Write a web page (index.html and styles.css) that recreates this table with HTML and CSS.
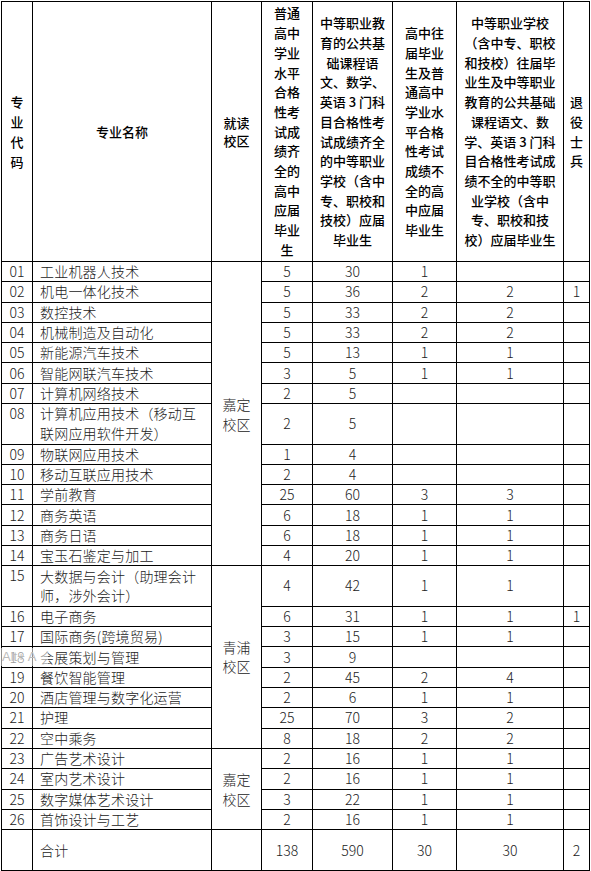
FILE: index.html
```html
<!DOCTYPE html>
<html lang="zh-CN">
<head>
<meta charset="utf-8">
<title>招生计划</title>
<link rel="stylesheet" href="styles.css">
</head>
<body>
<div class="wrap">
<table class="plan">
<colgroup>
<col class="c1"><col class="c2"><col class="c3"><col class="c4"><col class="c5"><col class="c6"><col class="c7"><col class="c8">
</colgroup>
<thead>
<tr class="head">
<th class="h-code">专<br>业<br>代<br>码</th>
<th>专业名称</th>
<th class="h-campus">就读<br>校区</th>
<th>普通<br>高中<br>学业<br>水平<br>合格<br>性考<br>试成<br>绩齐<br>全的<br>高中<br>应届<br>毕业<br>生</th>
<th>中等职业教<br>育的公共基<br>础课程语<br>文、数学、<br>英语 3 门科<br>目合格性考<br>试成绩齐全<br>的中等职业<br>学校（含中<br>专、职校和<br>技校）应届<br>毕业生</th>
<th>高中往<br>届毕业<br>生及普<br>通高中<br>学业水<br>平合格<br>性考试<br>成绩不<br>全的高<br>中应届<br>毕业生</th>
<th>中等职业学校<br>（含中专、职校<br>和技校）往届毕<br>业生及中等职业<br>教育的公共基础<br>课程语文、数<br>学、英语 3 门科<br>目合格性考试成<br>绩不全的中等职<br>业学校（含中<br>专、职校和技<br>校）应届毕业生</th>
<th>退<br>役<br>士<br>兵</th>
</tr>
</thead>
<tbody>
<tr><td>01</td><td class="name">工业机器人技术</td><td class="campus" rowspan="14">嘉定<br>校区</td><td>5</td><td>30</td><td>1</td><td></td><td></td></tr>
<tr><td>02</td><td class="name">机电一体化技术</td><td>5</td><td>36</td><td>2</td><td>2</td><td>1</td></tr>
<tr><td>03</td><td class="name">数控技术</td><td>5</td><td>33</td><td>2</td><td>2</td><td></td></tr>
<tr><td>04</td><td class="name">机械制造及自动化</td><td>5</td><td>33</td><td>2</td><td>2</td><td></td></tr>
<tr><td>05</td><td class="name">新能源汽车技术</td><td>5</td><td>13</td><td>1</td><td>1</td><td></td></tr>
<tr><td>06</td><td class="name">智能网联汽车技术</td><td>3</td><td>5</td><td>1</td><td>1</td><td></td></tr>
<tr><td>07</td><td class="name">计算机网络技术</td><td>2</td><td>5</td><td></td><td></td><td></td></tr>
<tr class="double"><td class="top">08</td><td class="name">计算机应用技术（移动互<br>联网应用软件开发）</td><td>2</td><td>5</td><td></td><td></td><td></td></tr>
<tr><td>09</td><td class="name">物联网应用技术</td><td>1</td><td>4</td><td></td><td></td><td></td></tr>
<tr><td>10</td><td class="name">移动互联应用技术</td><td>2</td><td>4</td><td></td><td></td><td></td></tr>
<tr><td>11</td><td class="name">学前教育</td><td>25</td><td>60</td><td>3</td><td>3</td><td></td></tr>
<tr><td>12</td><td class="name">商务英语</td><td>6</td><td>18</td><td>1</td><td>1</td><td></td></tr>
<tr><td>13</td><td class="name">商务日语</td><td>6</td><td>18</td><td>1</td><td>1</td><td></td></tr>
<tr><td>14</td><td class="name">宝玉石鉴定与加工</td><td>4</td><td>20</td><td>1</td><td>1</td><td></td></tr>
<tr class="double"><td class="top">15</td><td class="name">大数据与会计（助理会计<br>师，涉外会计）</td><td class="campus" rowspan="8">青浦<br>校区</td><td>4</td><td>42</td><td>1</td><td>1</td><td></td></tr>
<tr><td>16</td><td class="name">电子商务</td><td>6</td><td>31</td><td>1</td><td>1</td><td>1</td></tr>
<tr><td>17</td><td class="name">国际商务(跨境贸易)</td><td>3</td><td>15</td><td>1</td><td>1</td><td></td></tr>
<tr><td>18</td><td class="name">会展策划与管理</td><td>3</td><td>9</td><td></td><td></td><td></td></tr>
<tr><td>19</td><td class="name">餐饮智能管理</td><td>2</td><td>45</td><td>2</td><td>4</td><td></td></tr>
<tr><td>20</td><td class="name">酒店管理与数字化运营</td><td>2</td><td>6</td><td>1</td><td>1</td><td></td></tr>
<tr><td>21</td><td class="name">护理</td><td>25</td><td>70</td><td>3</td><td>2</td><td></td></tr>
<tr><td>22</td><td class="name">空中乘务</td><td>8</td><td>18</td><td>2</td><td>2</td><td></td></tr>
<tr><td>23</td><td class="name">广告艺术设计</td><td class="campus" rowspan="4">嘉定<br>校区</td><td>2</td><td>16</td><td>1</td><td>1</td><td></td></tr>
<tr><td>24</td><td class="name">室内艺术设计</td><td>2</td><td>16</td><td>1</td><td>1</td><td></td></tr>
<tr><td>25</td><td class="name">数字媒体艺术设计</td><td>3</td><td>22</td><td>1</td><td>1</td><td></td></tr>
<tr><td>26</td><td class="name">首饰设计与工艺</td><td>2</td><td>16</td><td>1</td><td>1</td><td></td></tr>
<tr class="total"><td></td><td class="name">合计</td><td></td><td>138</td><td>590</td><td>30</td><td>30</td><td>2</td></tr>
</tbody>
</table>
<div class="hint">Alt+ A</div>
</div>
</body>
</html>
```
FILE: styles.css
```css
html, body {
  margin: 0;
  padding: 0;
  background: #fff;
}
.wrap {
  position: relative;
  padding: 1px 0 0 1px;
}
.plan {
  border-collapse: collapse;
  table-layout: fixed;
  width: 589px;
  font-family: "Noto Sans CJK SC", "Noto Sans", sans-serif;
  color: #111;
}
.c1 { width: 31px; }
.c2 { width: 179px; }
.c3 { width: 50px; }
.c4 { width: 51px; }
.c5 { width: 80px; }
.c6 { width: 64px; }
.c7 { width: 107px; }
.c8 { width: 26px; }
.plan th, .plan td {
  border: 1px solid #000;
  padding: 0;
  text-align: center;
  vertical-align: middle;
  overflow: hidden;
  white-space: nowrap;
}
.plan th {
  font-size: 13px;
  font-weight: 500;
  line-height: 19.7px;
  color: #000;
  height: 259px;
}
.plan th.h-code { line-height: 20px; }
.plan th.h-campus { line-height: 18px; }
.plan td {
  font-size: 14px;
  font-weight: 300;
  line-height: 19px;
  height: 19.3px;
  color: #222;
}
.plan tr.double td { height: 39.5px; line-height: 19.5px; }
.plan tr.double td.top { vertical-align: top; }
.plan td.name {
  text-align: left;
  padding-left: 7px;
  letter-spacing: 0.2px;
}
.plan td.campus {
  line-height: 20px;
}
.plan tr.total td { height: 40px; }
.hint {
  position: absolute;
  left: 0;
  top: 648px;
  width: 46px;
  height: 18px;
  background: rgba(255, 255, 255, 0.55);
  color: #bbb;
  font-family: "Liberation Sans", sans-serif;
  font-size: 13px;
  line-height: 18px;
  padding-left: 2px;
  white-space: nowrap;
}
```
